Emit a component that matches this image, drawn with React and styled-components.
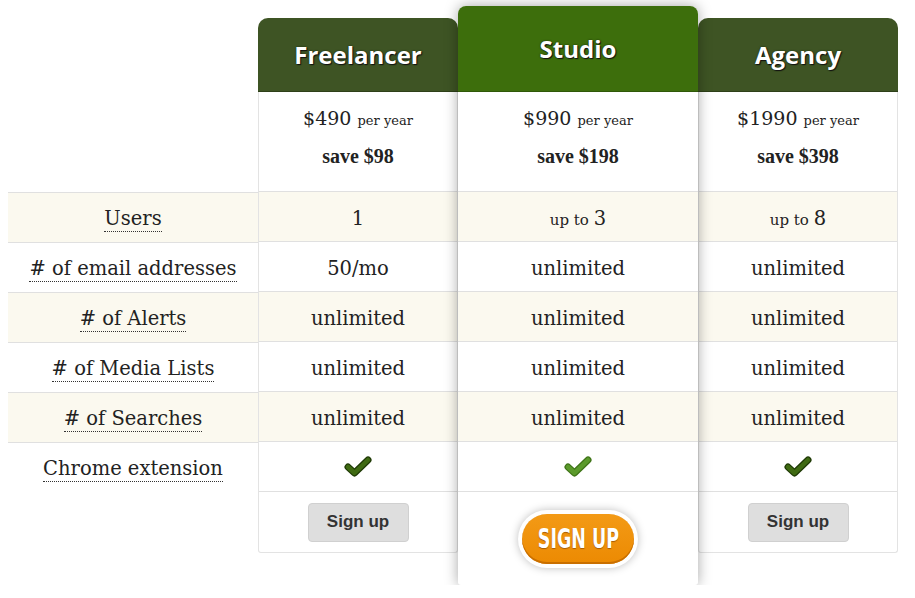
import React from 'react';
import styled, { createGlobalStyle } from 'styled-components';

// Global page reset
const GlobalStyle = createGlobalStyle`
  body {
    margin: 0;
    background: #fff;
    font-family: "DejaVu Serif", "Liberation Serif", serif;
    color: #222;
  }
`;

const Page = styled.div`
  padding: 6px 8px 0;
`;

const Table = styled.div`
  display: flex;
  align-items: flex-start;
`;

// Left column with the feature names
const LabelColumn = styled.div`
  width: 250px;
  margin-top: 186px;
  border-top: 1px solid #e0e0e0;
`;

const Cell = styled.div`
  box-sizing: border-box;
  height: 50px;
  display: flex;
  align-items: center;
  justify-content: center;
  border-bottom: 1px solid ${(p) => (p.$last ? 'transparent' : '#e0e0e0')};
  background: ${(p) => (p.$striped ? '#fbf9ef' : '#fff')};
  font-size: 19.5px;
`;

const Label = styled.span`
  display: inline-block;
  margin-top: 4px;
  line-height: 23px;
  padding-bottom: 1px;
  border-bottom: 1px dotted #333;
`;

const Value = styled.span`
  margin-top: 3px;
`;

// One plan column
const PlanColumn = styled.div`
  box-sizing: border-box;
  width: ${(p) => (p.$featured ? '240px' : '200px')};
  margin-top: ${(p) => (p.$featured ? '0' : '12px')};
  background: #fff;
  position: relative;
  z-index: ${(p) => (p.$featured ? 2 : 1)};
  border-radius: ${(p) => (p.$featured ? '8px 8px 3px 3px' : '10px 10px 3px 3px')};
  border: ${(p) => (p.$featured ? 'none' : '1px solid #e3e3e3')};
  border-top: none;
  box-shadow: ${(p) => (p.$featured ? '0 0 14px rgba(0, 0, 0, 0.35)' : 'none')};
`;

const Header = styled.div`
  box-sizing: border-box;
  height: ${(p) => (p.$featured ? '86px' : '74px')};
  margin: ${(p) => (p.$featured ? '0' : '0 -1px')};
  display: flex;
  align-items: center;
  justify-content: center;
  border-radius: ${(p) => (p.$featured ? '8px 8px 0 0' : '10px 10px 0 0')};
  background: ${(p) => (p.$featured ? '#3d6e0c' : '#3e5424')};
  border-bottom: 1px solid ${(p) => (p.$featured ? '#2f5808' : '#2e4019')};
  font-family: "Open Sans", "DejaVu Sans", sans-serif;
  font-weight: 700;
  font-size: 24px;
  color: #fff;
  text-shadow: 1px 1px 1px #111, 0 0 2px #1a2a0a;
`;

const PriceCell = styled.div`
  box-sizing: border-box;
  height: 100px;
  padding-top: 12px;
  border-bottom: 1px solid #e0e0e0;
  text-align: center;
`;

const PriceLine = styled.div`
  line-height: 28px;
  font-size: 19px;
`;

const Small = styled.span`
  font-size: 13px;
`;

const SaveLine = styled.div`
  margin-top: 7px;
  line-height: 28px;
  font-family: "Liberation Serif", "DejaVu Serif", serif;
  font-size: 20px;
  font-weight: 700;
`;

const ActionCell = styled.div`
  box-sizing: border-box;
  height: ${(p) => (p.$featured ? '93px' : '60px')};
  display: flex;
  align-items: center;
  justify-content: center;
`;

const PlainButton = styled.button`
  width: 101px;
  height: 39px;
  border: 1px solid #d0d0d0;
  border-radius: 4px;
  background: #dedede;
  color: #333;
  font-family: "Liberation Sans", Arial, sans-serif;
  font-weight: 700;
  font-size: 17px;
  cursor: pointer;
`;

const PillButton = styled.button`
  width: 112px;
  height: 50px;
  border: none;
  border-radius: 25px;
  background: linear-gradient(#f39a16, #ec8a02);
  box-shadow: 0 0 0 4px #fff, 0 0 8px 4px rgba(0, 0, 0, 0.25), inset 0 -2px 0 #c96f00;
  color: #fff;
  font-family: "DejaVu Sans Condensed", "Liberation Sans Narrow", sans-serif;
  font-weight: 700;
  font-size: 27px;
  white-space: nowrap;
  padding: 0;
  cursor: pointer;
`;

const PillText = styled.span`
  display: inline-block;
  transform: scaleX(0.72);
  text-shadow: 0 1px 1px rgba(120, 60, 0, 0.6);
`;

const UpTo = styled.span`
  font-size: 15px;
  margin-right: 5px;
`;

const CheckIcon = ({ light }) => (
  <svg width="28" height="22" viewBox="0 0 28 22">
    <path d="M4 11 L10.5 17 L24 4" fill="none" stroke={light ? '#3f7418' : '#1f3a06'} strokeWidth="7" strokeLinecap="round" strokeLinejoin="round" />
    <path d="M4 11 L10.5 17 L24 4" fill="none" stroke={light ? '#5b9a2b' : '#3f6a12'} strokeWidth="4.5" strokeLinecap="round" strokeLinejoin="round" />
  </svg>
);

const features = [
  'Users',
  '# of email addresses',
  '# of Alerts',
  '# of Media Lists',
  '# of Searches',
  'Chrome extension',
];

const plans = [
  { name: 'Freelancer', price: '$490', save: 'save $98', users: '1', email: '50/mo' },
  { name: 'Studio', price: '$990', save: 'save $198', users: '3', upto: true, email: 'unlimited', featured: true },
  { name: 'Agency', price: '$1990', save: 'save $398', users: '8', upto: true, email: 'unlimited' },
];

const App = () => {
  return (
    <Page>
      <GlobalStyle />
      <Table>
        <LabelColumn>
          {features.map((f, i) => (
            <Cell key={f} $striped={i % 2 === 0} $last={i === features.length - 1}>
              <Label>{f}</Label>
            </Cell>
          ))}
        </LabelColumn>

        {plans.map((plan) => (
          <PlanColumn key={plan.name} $featured={plan.featured}>
            <Header $featured={plan.featured}>{plan.name}</Header>
            <PriceCell>
              <PriceLine>
                {plan.price} <Small>per year</Small>
              </PriceLine>
              <SaveLine>{plan.save}</SaveLine>
            </PriceCell>
            <Cell $striped>
              <Value>
                {plan.upto && <UpTo>up to</UpTo>}
                {plan.users}
              </Value>
            </Cell>
            <Cell><Value>{plan.email}</Value></Cell>
            <Cell $striped><Value>unlimited</Value></Cell>
            <Cell><Value>unlimited</Value></Cell>
            <Cell $striped><Value>unlimited</Value></Cell>
            <Cell>
              <CheckIcon light={plan.featured} />
            </Cell>
            <ActionCell $featured={plan.featured}>
              {plan.featured ? (
                <PillButton><PillText>SIGN UP</PillText></PillButton>
              ) : (
                <PlainButton>Sign up</PlainButton>
              )}
            </ActionCell>
          </PlanColumn>
        ))}
      </Table>
    </Page>
  );
};

export default App;
